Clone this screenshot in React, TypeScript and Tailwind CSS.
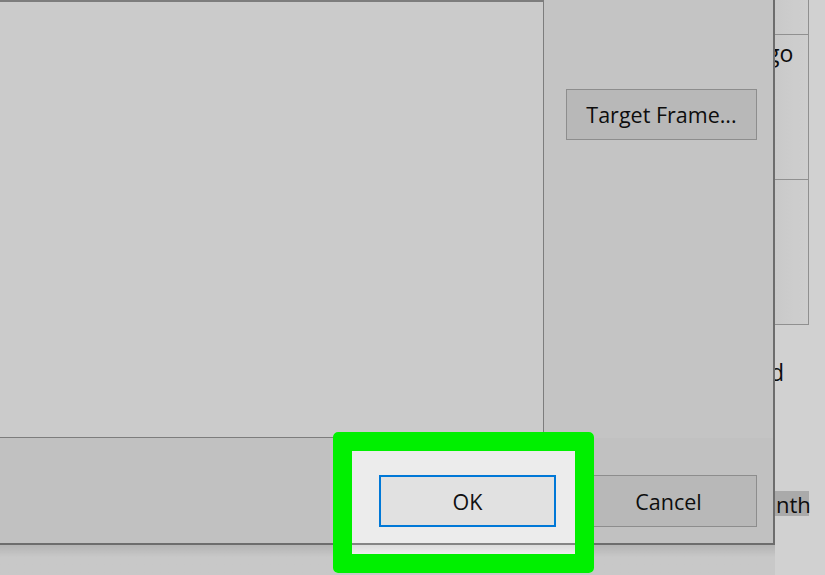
import React from "react";

const font = { fontFamily: '"Open Sans", "Noto Sans", "Liberation Sans", sans-serif' };

export default function App() {
  return (
    <div
      className="relative w-[825px] h-[575px] overflow-hidden flex flex-row bg-[#ffffff] text-[#111111]"
      style={font}
    >
      {/* Dialog column */}
      <div className="relative z-10 flex flex-col w-[775px] shrink-0">
        <div className="flex flex-col h-[545px] bg-[#ececec] border-r-2 border-b-2 border-[#858585]">
          {/* top row */}
          <div className="flex flex-row h-[438px]">
            <div className="w-[544px] h-full bg-[#f8f8f8] border-t-2 border-r border-b border-[#999999]" />
            <div className="flex-1 bg-[#f0f0f0] pt-[89px] pl-[22px]">
              <div className="w-[191px] h-[51px] bg-[#e1e1e1] border border-[#adadad] flex items-center justify-center pt-[2px] text-[21.5px]">
                Target Frame...
              </div>
            </div>
          </div>
          {/* footer */}
          <div className="flex-1 flex flex-row items-start pt-[37px] pl-[379px] gap-[24px]">
            <div className="w-[177px] h-[52px] bg-[#e1e1e1] border-2 border-[#0078d7] flex items-center justify-center pt-[3px] text-[21.5px]">
              OK
            </div>
            <div className="w-[177px] h-[52px] bg-[#e1e1e1] border border-[#adadad] flex items-center justify-center pt-[3px] text-[21.5px]">
              Cancel
            </div>
          </div>
        </div>
        {/* desktop below dialog, with shadow */}
        <div className="flex-1 bg-gradient-to-b from-[#dcdcdc] to-[#f4f4f4] to-[40%]" />
      </div>

      {/* Background window sliver */}
      <div className="relative z-0 flex flex-col w-[50px] overflow-hidden bg-[#ffffff]">
        <div className="flex flex-col w-[34px] h-[325px] border-r border-[#b0b0b0] bg-gradient-to-r from-[#f6f6f6] to-[#fdfdfd]">
          <div className="h-[35px] border-b border-[#b0b0b0]" />
          <div className="h-[144px] text-[23px] leading-none pt-[7px] -ml-[8px] whitespace-nowrap">go</div>
          <div className="flex-1 border-t border-b border-[#b0b0b0]" />
        </div>
        <div className="pt-[36px] -ml-[5px] text-[23px] font-medium leading-none whitespace-nowrap">d</div>
        <div className="mt-[107px] w-[34px] h-[25px] bg-[#d0d0d0] flex items-center pl-[1px]">
          <span className="text-[22px] font-medium leading-none whitespace-nowrap">nth</span>
        </div>
      </div>

      {/* Green highlight with dimming of everything else */}
      <div className="absolute z-20 left-[333px] top-[432px] w-[261px] h-[141px] border-[19px] border-[#00f000] rounded-[5px] shadow-[0_0_0_2000px_rgba(0,0,0,0.18)]" />
    </div>
  );
}
